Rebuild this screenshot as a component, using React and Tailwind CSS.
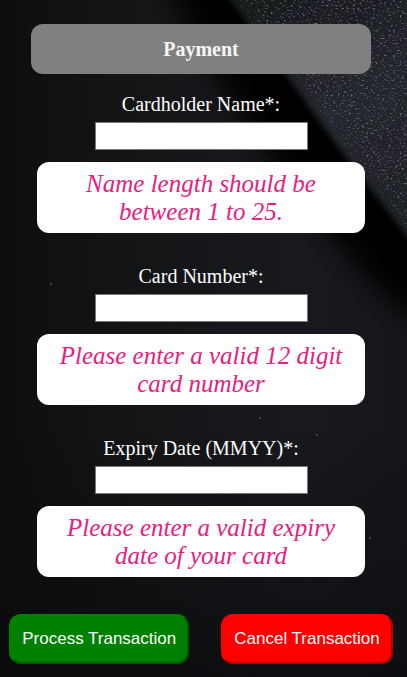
import React from "react";

const fields = [
  { id: "name", label: "Cardholder Name*:", error: "Name length should be between 1 to 25." },
  { id: "number", label: "Card Number*:", error: "Please enter a valid 12 digit card number" },
  { id: "expiry", label: "Expiry Date (MMYY)*:", error: "Please enter a valid expiry date of your card" },
];

function LeatherBackdrop() {
  return (
    <svg
      className="absolute inset-0 -z-10 h-full w-full"
      viewBox="0 0 407 677"
      preserveAspectRatio="xMidYMid slice"
      aria-hidden="true"
    >
      <defs>
        <linearGradient id="base" x1="0" y1="0" x2="407" y2="0" gradientUnits="userSpaceOnUse">
          <stop offset="0" stopColor="#0d0e10" />
          <stop offset="0.35" stopColor="#141517" />
          <stop offset="0.75" stopColor="#18191d" />
          <stop offset="1" stopColor="#15161a" />
        </linearGradient>
        <linearGradient id="fade" x1="0" y1="420" x2="0" y2="677" gradientUnits="userSpaceOnUse">
          <stop offset="0" stopColor="#08090b" stopOpacity="0" />
          <stop offset="1" stopColor="#08090b" stopOpacity="0.6" />
        </linearGradient>
        <linearGradient id="hide" x1="300" y1="0" x2="407" y2="200" gradientUnits="userSpaceOnUse">
          <stop offset="0" stopColor="#181a1f" />
          <stop offset="0.5" stopColor="#24272e" />
          <stop offset="1" stopColor="#1e2026" />
        </linearGradient>
        <filter id="soft" x="-30%" y="-30%" width="160%" height="160%">
          <feGaussianBlur stdDeviation="14" />
        </filter>
        <filter id="edge" x="-10%" y="-10%" width="120%" height="120%">
          <feGaussianBlur stdDeviation="3" />
        </filter>
        <filter id="grain" x="0" y="0" width="100%" height="100%" colorInterpolationFilters="sRGB">
          <feTurbulence type="fractalNoise" baseFrequency="0.45 0.6" numOctaves="1" seed="7" />
          <feColorMatrix values="0 0 0 0 0.58  0 0 0 0 0.6  0 0 0 0 0.62  4 0 0 0 -2.25" />
        </filter>
        <linearGradient id="reveal" x1="290" y1="85" x2="306" y2="73" gradientUnits="userSpaceOnUse">
          <stop offset="0" stopColor="#000" />
          <stop offset="1" stopColor="#fff" />
        </linearGradient>
        <mask id="corner" maskUnits="userSpaceOnUse" x="227" y="0" width="180" height="250">
          <path d="M227 0 L284 72 L345 156 L407 240 V0Z" fill="url(#reveal)" />
        </mask>
      </defs>
      <rect width="407" height="677" fill="url(#base)" />
      <rect width="407" height="677" fill="url(#fade)" />
      <path d="M158 -40 L198 45 L258 140 L322 224 L380 292 L450 350 V-40Z" fill="#000" filter="url(#soft)" />
      <path d="M200 -40 L284 72 L345 156 L430 266 V-40Z" fill="url(#hide)" filter="url(#edge)" />
      <g mask="url(#corner)">
        <rect x="227" width="180" height="250" filter="url(#grain)" opacity="0.75" />
      </g>
      <g fill="#4b4d50">
        <circle cx="51" cy="284" r="1" />
        <circle cx="260" cy="418" r="1" />
        <circle cx="317" cy="435" r="1" />
        <circle cx="370" cy="538" r="1" />
      </g>
    </svg>
  );
}

export default function App() {
  return (
    <main className="relative isolate min-h-screen overflow-hidden bg-[#0e0f11] pt-6 pr-[5px] pb-3 font-['Liberation_Serif',serif] text-xl text-white">
      <LeatherBackdrop />
      <form className="flex flex-col items-center" onSubmit={(e) => e.preventDefault()}>
        <h1 className="w-full max-w-[340px] rounded-xl bg-[#808080] py-3 text-center text-xl leading-[26px] font-bold text-[#f5f5f5]">
          Payment
        </h1>
        <div className="mt-[18px] flex w-full flex-col items-center gap-[31px]">
          {fields.map((f) => (
            <div key={f.id} className="flex w-full flex-col items-center">
              <label htmlFor={f.id} className="leading-6">
                {f.label}
              </label>
              <input
                id={f.id}
                type="text"
                aria-describedby={f.id + "-error"}
                className="mt-1.5 h-7 w-[213px] border border-[#767676] bg-white px-1 text-black"
              />
              <p
                id={f.id + "-error"}
                className="mt-3 w-full max-w-[328px] rounded-xl bg-white px-5 pt-2 pb-[7px] text-center text-[25px] leading-7 text-[#e7207f] italic"
              >
                {f.error}
              </p>
            </div>
          ))}
        </div>
        <div className="mt-[37px] flex justify-center gap-8 font-['Liberation_Sans',sans-serif] text-[17px]">
          <button
            type="submit"
            className="h-[50px] rounded-xl border-2 border-t-[#008000] border-r-[#005a00] border-b-[#005a00] border-l-[#008000] bg-[#008000] px-[11px] whitespace-nowrap"
          >
            Process Transaction
          </button>
          <button
            type="button"
            className="h-[50px] rounded-xl border-2 border-t-[#ff0000] border-r-[#b80000] border-b-[#b80000] border-l-[#ff0000] bg-[#ff0000] px-[11px] whitespace-nowrap"
          >
            Cancel Transaction
          </button>
        </div>
      </form>
    </main>
  );
}
